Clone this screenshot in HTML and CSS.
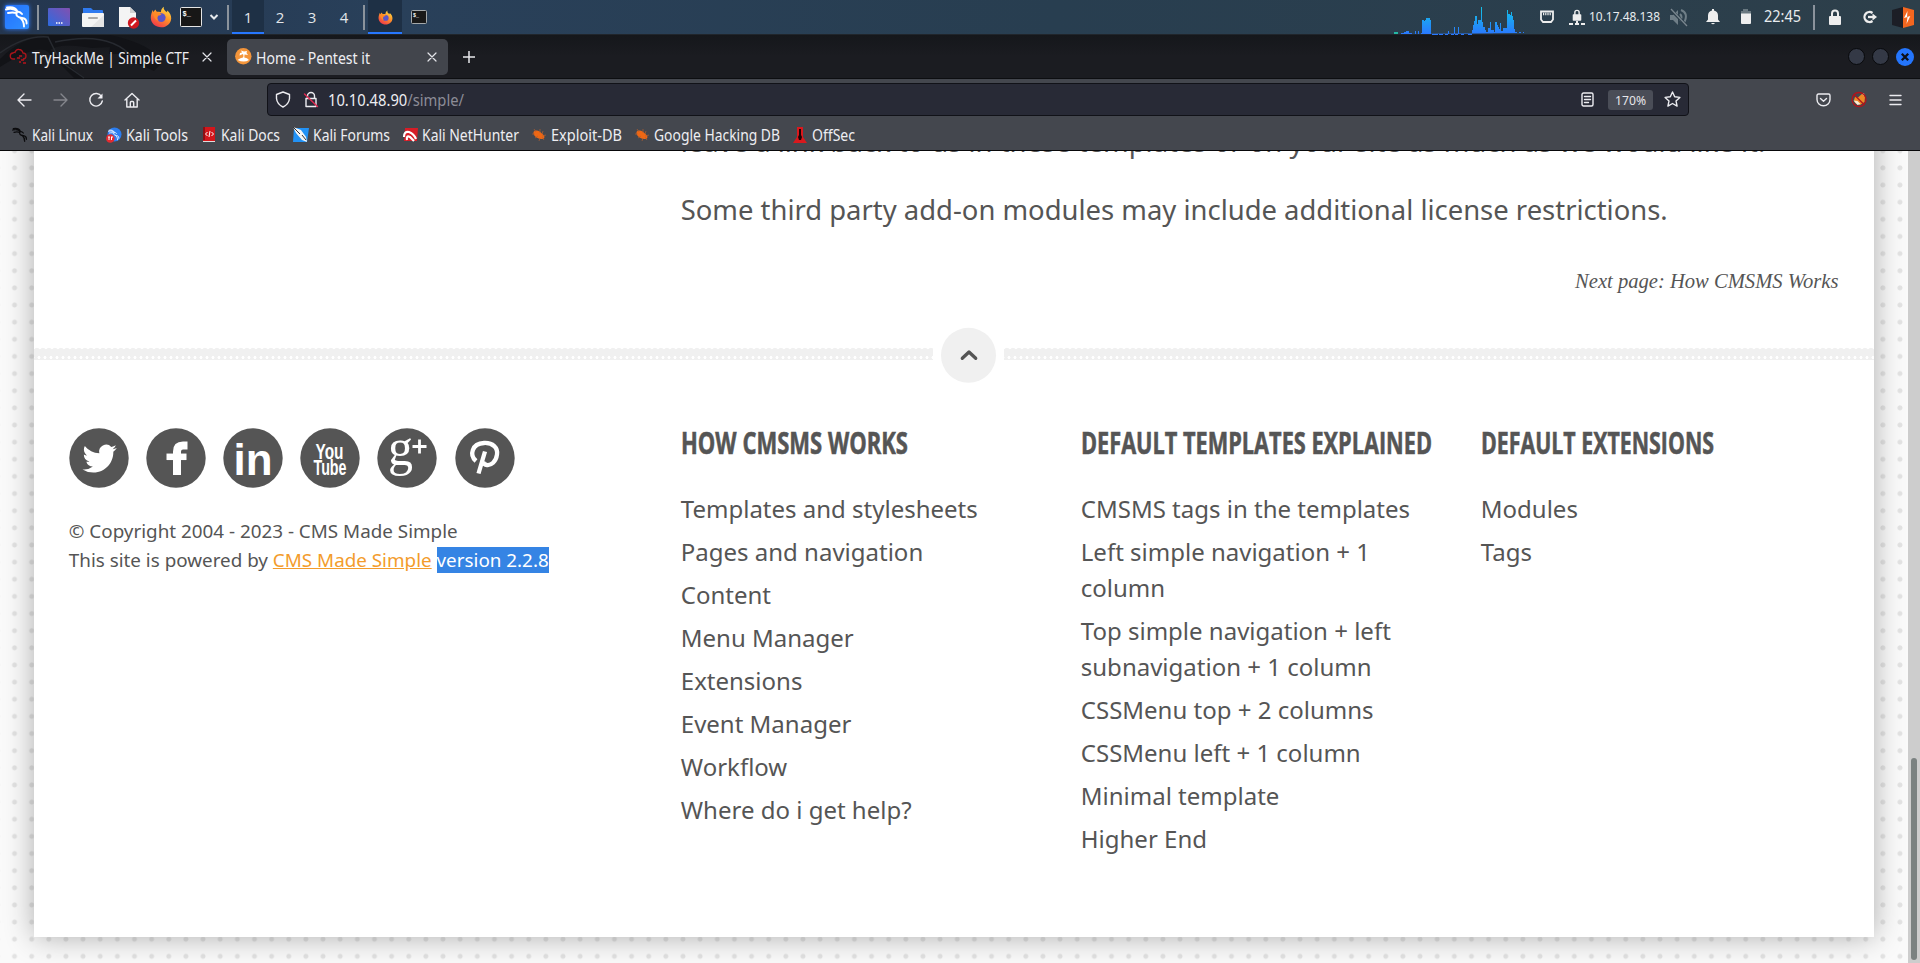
FILE: index.html
```html
<!DOCTYPE html>
<html lang="en">
<head>
<meta charset="utf-8">
<title>Home - Pentest it</title>
<link rel="stylesheet" href="styles.css">
</head>
<body>
<svg class="defs" width="0" height="0">
  <defs>
    <linearGradient id="gDesk" x1="0" y1="1" x2="1" y2="0"><stop offset="0" stop-color="#2d6be0"/><stop offset="1" stop-color="#8250b0"/></linearGradient>
    <linearGradient id="gKali" x1="0" y1="0" x2="1" y2="1"><stop offset="0" stop-color="#2470ff"/><stop offset="1" stop-color="#2f90ff"/></linearGradient>
    <linearGradient id="gFox" x1="0.8" y1="0" x2="0.2" y2="1"><stop offset="0" stop-color="#ffe14a"/><stop offset=".45" stop-color="#ff9328"/><stop offset="1" stop-color="#f0304d"/></linearGradient>
    <linearGradient id="gGraph" gradientUnits="userSpaceOnUse" x1="0" y1="10" x2="0" y2="34"><stop offset="0" stop-color="#14bde8"/><stop offset="1" stop-color="#2a78ff"/></linearGradient>
  </defs>
  <symbol id="firefox" viewBox="0 0 22 22">
    <path fill="url(#gFox)" d="M14 .8c-1 2 .5 3.300 1.500 4.500 1 .4 1.600 1.200 1.600 1.200-.2-1 .2-2 .2-2 2.700 2.200 4 5 3.900 8C21 17.600 16.700 21.300 11.300 21.300 5.600 21.300 1 17.300.8 12 .7 9 1.800 6.300 2.700 4l.8 2.200C4 5 5 4 5.700 3.500c0 1.300.7 1.900 1.500 2.300 2-.3 3 .1 3.600.4C11 3.800 12 1.900 14 .8z"/>
    <circle cx="11.300" cy="11.600" r="4.300" fill="#5a55c8"/>
    <path d="M3 7c2-1 4-1 6 0l2.500 1.200c-.8 1-1.800 1-3 1.400C7 11 7 13 8.500 15c-3-1-5-4-5.500-8z" fill="#ff8a26"/>
  </symbol>
  <symbol id="dragon" viewBox="0 0 24 24">
    <path d="M1 4.500c5-1.300 9-.6 11.500 2.200M3 8c4-1 6-.7 8.500 0M2 2.500C8 1.500 11 3 12.500 6.500c-3 4 1 6.300 4.500 6.500 3 .3 4.800 1.700 4.600 5.500M15 12.500c3 2.500 4 5 4 9M12.500 6.500c2 .3 3.500 1 4.500 2.500" fill="none" stroke="currentColor" stroke-width="1.900" stroke-linecap="round"/>
  </symbol>
  <symbol id="bug" viewBox="0 0 16 16">
    <path d="M2.500 5C5 2 9 4 13 8.500c1.300 2.200-.3 4-3 3.500C6 11.500 2 9 2.500 5z" fill="#ee6714"/>
    <path d="M1 7l3 0M4 11l3-2M3 2l2 3M9 2l0 4M12 4l-1 3M15 8l-4 1M8 14l1-3M13 13l-2-3" stroke="#b5602f" stroke-width=".7"/>
  </symbol>
  <symbol id="close" viewBox="0 0 10 10"><path d="M1 1l8 8M9 1l-8 8" stroke="#e4e5ea" stroke-width="1.200" stroke-linecap="round"/></symbol>
  <symbol id="padlock" viewBox="0 0 14 16"><path fill="#eee" d="M3 7V4.500a4 4 0 0 1 8 0V7h1q1 0 1 1v7q0 1-1 1H2q-1 0-1-1V8q0-1 1-1zm2 0h4V4.500a2 2 0 0 0-4 0z"/></symbol>
</svg>

<header class="panel">
  <svg class="kali" width="26" height="26"><rect x="1" y="1" width="24" height="24" rx="2" fill="url(#gKali)"/><g color="#fff"><use href="#dragon" x="1" y="1" width="24" height="24"/></g></svg>
  <i class="sep"></i>
  <svg width="22" height="18"><rect width="22" height="18" rx="1" fill="url(#gDesk)"/><path d="M8 15h1.500M10.500 15H12M13 15h1.500" stroke="#fff" stroke-width="1.500"/></svg>
  <svg width="22" height="21"><path d="M1 1h8l2 2h9q1 0 1 1v5H1z" fill="#2f7af0"/><path d="M0 7q0-1 1-1h20q1 0 1 1v12q0 1-1 1H1q-1 0-1-1z" fill="#f4f4f4"/><path d="M22 8v12H9z" fill="#e5e5e5"/><path d="M7 11h8" stroke="#aaa" stroke-width="2" stroke-linecap="round"/></svg>
  <svg width="23" height="23"><path d="M2 1h11l6 6v14H2z" fill="#f4f4f4"/><path d="M13 1v6h6z" fill="#cfcfcf"/><circle cx="16.500" cy="17" r="5.700" fill="#cf1820"/><path d="M14 19.500l5-5" stroke="#fff" stroke-width="2"/></svg>
  <svg width="23" height="22"><use href="#firefox" width="22" height="22"/></svg>
  <svg width="22" height="20"><rect x=".5" y=".5" width="21" height="19" rx="1" fill="#171717" stroke="#e5e5e5"/><text x="2.500" y="9" class="prompt">$_</text></svg>
  <svg width="10" height="8"><path d="M1.500 2l3.500 3.500L8.500 2" fill="none" stroke="#e6e9ec" stroke-width="2"/></svg>
  <i class="sep"></i>
  <span class="ws current">1</span><span class="ws">2</span><span class="ws">3</span><span class="ws">4</span>
  <i class="sep"></i>
  <span class="task current"><svg width="15" height="15"><use href="#firefox" width="15" height="15"/></svg></span>
  <span class="task"><svg width="16" height="14"><rect x=".5" y=".5" width="15" height="13" rx="1" fill="#191919" stroke="#a4a8aa"/><text x="2" y="6.500" class="prompt tiny">$_</text></svg></span>
  <svg width="140" height="34">
    <path fill="url(#gGraph)" d="M8 34v-1h3v-1h2v-1h3v2h3v1h3v-3h1v3h2v-3h1v3h2v-1h1v-13h2v1h1v-1h1v-2h4v2h1v14h1v2h2v-1h2v1h2v-2h1v2h3v-1h1v-1h2v2h3v-5h1v3h2v1h2v1h1v-9h1v9h3v-9h1v7h2v1h2v1h1v-2h4v1h4v-5h1v-5h1v-4h1v-5h2v8h1v-4h3v-13h1v15h1v5h2v3h1v2h2v-4h2v-6h1v8h3v2h1v-10h2v3h1v2h1v2h1v-6h1v8h2v-3h4v-18h1v4h2v1h1v-3h1v4h1v4h1v9h1v3h2v1h2v-1h2v1h2v-1h1v1z"/>
    <path d="M1 33h4" stroke="#25e0c0" stroke-width="1.500"/>
  </svg>
  <svg width="16" height="14"><path d="M2 1.500h12v8l-2 2.500H4L2 9.500z" fill="none" stroke="#eee" stroke-width="1.800"/><path d="M4 4h8" stroke="#eee" stroke-width="2.500" stroke-dasharray="1 .8"/></svg>
  <svg width="16" height="17"><use href="#padlock" x="3" width="10" height="12"/><path d="M0 15h4M6 15h4M12 15h4M8 12v4" stroke="#eee" stroke-width="2"/></svg>
  <svg width="73" height="18"><text x="-1" y="13" textLength="71" lengthAdjust="spacingAndGlyphs" class="ip">10.17.48.138</text></svg>
  <svg width="19" height="19"><path d="M1 7h3l5-5v15l-5-5H1z" fill="#6f7e87"/><path d="M11 6q3 3 0 7M12 2q8 3 3 13" fill="none" stroke="#6f7e87" stroke-width="2"/><path d="M1 1l17 17" stroke="#2b3c48" stroke-width="3"/><path d="M2 1l16 17" stroke="#7a8790" stroke-width="1.300"/></svg>
  <svg width="14" height="16"><path fill="#eee" d="M6 0h2v1.500q4 1 4 5v4l2 2.500H0l2-2.500v-4q0-4 4-5zM5 14h4q-2 2.500-4 0z"/></svg>
  <svg width="12" height="16"><path d="M1 5V2h2V0h5v2h3v3z" fill="#697880"/><path d="M1 4.500h10V14q0 1-1 1H2q-1 0-1-1z" fill="#eee"/></svg>
  <svg width="40" height="20"><text x="0" y="15" textLength="37" lengthAdjust="spacingAndGlyphs" class="clock">22:45</text></svg>
  <i class="sep"></i>
  <svg width="14" height="17"><use href="#padlock" width="14" height="16"/></svg>
  <svg width="16" height="14"><path d="M10.500 3A5 5 0 1 0 10.500 11" fill="none" stroke="#eee" stroke-width="2.300"/><path d="M6 7h6" stroke="#eee" stroke-width="2.300"/><path d="M10.500 3.500L15 7l-4.500 3.500z" fill="#eee"/></svg>
  <svg width="22" height="21"><path d="M0 3l11-3v21L0 18z" fill="#1c1e26"/><path d="M11 0l11 3v15l-11 3z" fill="#f3661f"/><path d="M15.500 4l-3.500 7 3.500-1-1 7 3.800-8-3.300 1z" fill="#fff"/></svg>
</header>

<nav class="tabs">
  <svg class="etching" width="180" height="43"><path d="M0 24Q20 3 50 0h60q45 10 52 28l-8 8-18-8-18 0 5-9-14 0 1-7-18 1Q60 7 50 15l34 28H74L48 17Q38 8 0 32z" fill="#121317"/><path d="M0 18Q25 0 48 2L60 26 84 43M55 7q55-12 78 16" fill="none" stroke="#272a30" stroke-width="1.500"/></svg>
  <svg width="17" height="17"><path d="M5 11H3.500A3 3 0 0 1 3 5Q4 4 5 4.500 6 1 9 1.500q3 0 4 3.500 3 0 3 3t-3 3" fill="none" stroke="#a8151b" stroke-width="1.300"/><path d="M7 10h3M11 12h3M9 14h2M13 15h3M9 8h3" stroke="#b7131b" stroke-width="1.300"/></svg>
  <svg width="165" height="24"><text x="0" y="18.500" textLength="157" lengthAdjust="spacingAndGlyphs" class="ui">TryHackMe | Simple CTF</text></svg>
  <svg width="10" height="10"><use href="#close" width="10" height="10"/></svg>
  <div class="tab-active">
    <svg width="17" height="17"><circle cx="8.300" cy="8.300" r="8.200" fill="#f4953a"/><path d="M2.500 12q3-2.500 5.500-2.500Q9 8 8 6L4.500 7.500 5 5 7 4.500 6 2.500l3 1L12 3l-.5 2L13 7 9.500 6.500 9.300 9.500q3 0 4.700 2.500-5 3-11.500 0z" fill="#fff"/></svg>
    <svg width="120" height="24"><text x="-1" y="18.500" textLength="114" lengthAdjust="spacingAndGlyphs" class="ui">Home - Pentest it</text></svg>
    <svg width="10" height="10"><use href="#close" width="10" height="10"/></svg>
  </div>
  <svg width="12" height="12"><path d="M6 0v12M0 6h12" stroke="#e8e8ec" stroke-width="1.500"/></svg>
  <i class="wbtn"></i><i class="wbtn"></i>
  <svg width="18" height="18"><circle cx="9" cy="9" r="9" fill="#2475fc"/><path d="M5.800 5.800l6.400 6.400M12.200 5.800l-6.400 6.400" stroke="#0d1017" stroke-width="2.300"/></svg>
</nav>

<div class="toolbar">
  <svg width="15" height="14" class="ln"><path d="M14 7H1M7 1L1 7l6 6"/></svg>
  <svg width="15" height="14" class="ln dim"><path d="M1 7h13M8 1l6 6-6 6"/></svg>
  <svg width="16" height="16" class="ln"><path d="M13.500 4.500A6.300 6.300 0 1 0 14.300 9"/><path d="M14.500 1.500v5h-5z" fill="#f0f0f4" stroke="none"/></svg>
  <svg width="16" height="16" class="ln"><path d="M1 8l7-6.500L15 8M2.800 7v8h10.400V7M6.300 15v-4.500q0-1 1-1h1.400q1 0 1 1V15"/></svg>
  <div class="urlbar">
    <svg width="16" height="17" class="ln"><path d="M8 1l6.500 2.500v4Q14 13 8 16 2 13 1.500 7.500v-4z"/></svg>
    <svg width="17" height="17" class="ln"><path d="M4.500 7.500V5a3.500 3.500 0 0 1 7 0v2.500M3 7.500h10V15.500H3z"/><path d="M1.500 3l13 12.500" class="slash"/></svg>
    <svg width="160" height="24"><text y="17.500" x="0" textLength="136" lengthAdjust="spacingAndGlyphs" class="ui">10.10.48.90<tspan class="path">/simple/</tspan></text></svg>
    <svg width="13" height="15" class="ln"><rect x="1" y="1" width="11" height="13" rx="1.500"/><path d="M3.500 4.500h6M3.500 7.500h6M3.500 10.500h4"/></svg>
    <span class="zoom"><svg width="32" height="18"><text x="0" y="14" textLength="31" lengthAdjust="spacingAndGlyphs" class="pct">170%</text></svg></span>
    <svg width="17" height="17" class="ln"><path d="M8.500 1l2.200 4.800 5.200.6-3.900 3.500 1.100 5.200-4.600-2.600-4.600 2.600L5 9.900 1.100 6.400l5.200-.6z"/></svg>
  </div>
  <svg width="15" height="14" class="ln"><path d="M2.500 1h10q1.500 0 1.500 1.500v4a6.500 6.300 0 0 1-13 0v-4Q1 1 2.500 1zM4.500 5.500l3 2.800 3-2.800"/></svg>
  <svg width="17" height="17"><path d="M4 6l3 .5L12 2l2 4-.5 5L9 14l-5-2-1-3z" fill="#ee8a25"/><path d="M2.500 9.500l4 4.500 3-1-3-3zM11 3l2-1 .5 3z" fill="#f6ead8"/><circle cx="8" cy="8.500" r="7" fill="none" stroke="#b2131b" stroke-width="1.300"/><path d="M3 3.500l10 10" stroke="#b2131b" stroke-width="1.300"/></svg>
  <svg width="13" height="12" class="ln"><path d="M1 1.500h11M1 6h11M1 10.500h11"/></svg>
</div>

<div class="bookmarks">
  <svg width="17" height="17" color="#0b0b0d"><use href="#dragon" width="16" height="16"/></svg>
  <svg width="66" height="22"><text y="16.500" textLength="61" lengthAdjust="spacingAndGlyphs" class="ui">Kali Linux</text></svg>
  <svg width="17" height="17" color="#e6efff"><circle cx="8.500" cy="7.500" r="7" fill="#2b7df0"/><use href="#dragon" x="2" y="2" width="12" height="12"/><circle cx="4.300" cy="11.500" r="4.300" fill="#e32b30"/><path d="M3 10v3M5.500 10v3M2 10h2M5 10h2" stroke="#fff"/></svg>
  <svg width="66" height="22"><text y="16.500" textLength="62" lengthAdjust="spacingAndGlyphs" class="ui">Kali Tools</text></svg>
  <svg width="15" height="16"><rect x="1" width="12" height="15" fill="#d3161b"/><path d="M1 0h2v13H1z" fill="#8c1014"/><path d="M1 14.500h12" stroke="#ddd"/><path d="M5.500 5l-2 2 2 2M9.500 5l2 2-2 2M8 4L7 10" fill="none" stroke="#fff"/></svg>
  <svg width="62" height="22"><text y="16.500" textLength="59" lengthAdjust="spacingAndGlyphs" class="ui">Kali Docs</text></svg>
  <svg width="17" height="16"><path d="M1 1h15l-2 14H0z" fill="#2292f5"/><path d="M0 0l8 3 5 7 1 5-5-2-6-7z" fill="#f4f4f4"/><path d="M0 0l7 7M9 8l4 5" stroke="#333"/></svg>
  <svg width="80" height="22"><text y="16.500" textLength="77" lengthAdjust="spacingAndGlyphs" class="ui">Kali Forums</text></svg>
  <svg width="17" height="16"><path d="M3 1h13l-1 13H2z" fill="#d61d27"/><path d="M2 10Q2 4 7 5q5 2 7 7M5 13q-1-5 3-3l4 4" fill="none" stroke="#fff" stroke-width="2.200"/></svg>
  <svg width="100" height="22"><text y="16.500" textLength="97" lengthAdjust="spacingAndGlyphs" class="ui">Kali NetHunter</text></svg>
  <svg width="16" height="16"><use href="#bug" width="16" height="16"/></svg>
  <svg width="75" height="22"><text y="16.500" textLength="71" lengthAdjust="spacingAndGlyphs" class="ui">Exploit-DB</text></svg>
  <svg width="16" height="16"><use href="#bug" width="16" height="16"/></svg>
  <svg width="130" height="22"><text y="16.500" textLength="126" lengthAdjust="spacingAndGlyphs" class="ui">Google Hacking DB</text></svg>
  <svg width="15" height="17"><path d="M4 0h6v10l4 6H0l4-6z" fill="#d9181d"/><path d="M6 2h2v6l1 2-1 3H6l-1-3 1-2z" fill="#1a0506"/></svg>
  <svg width="50" height="22"><text y="16.500" textLength="43" lengthAdjust="spacingAndGlyphs" class="ui">OffSec</text></svg>
</div>

<div class="viewport">
  <div class="canvas">
    <main class="sheet">
      <section class="article">
        <p class="cut">leave a link back to us in these templates or on your site as much as we would like it.</p>
        <p class="terms">Some third party add-on modules may include additional license restrictions.</p>
        <p class="next">Next page: How CMSMS Works</p>
      </section>
      <div class="divider">
        <i class="lace"></i>
        <svg width="71" height="56"><circle cx="35.500" cy="28.300" r="27.500" fill="#f0f0f0"/><path d="M29.300 31.300l6.700-6.300 6.700 6.300" fill="none" stroke="#555" stroke-width="3.300" stroke-linecap="round" stroke-linejoin="round"/></svg>
        <i class="lace"></i>
      </div>
      <footer class="foot">
        <div class="about">
          <div class="social">
            <svg width="60" height="60"><circle cx="30" cy="30" r="29.700"/><path transform="translate(13.500 13.500) scale(1.430)" fill="#fff" d="M23.953 4.570a10 10 0 0 1-2.825.775 4.958 4.958 0 0 0 2.163-2.723c-.951.555-2.005.959-3.127 1.184a4.920 4.920 0 0 0-8.384 4.482C7.690 8.095 4.067 6.130 1.640 3.162a4.822 4.822 0 0 0-.666 2.475c0 1.710.870 3.213 2.188 4.096a4.904 4.904 0 0 1-2.228-.616v.060a4.923 4.923 0 0 0 3.946 4.827 4.996 4.996 0 0 1-2.212.085 4.936 4.936 0 0 0 4.604 3.417 9.867 9.867 0 0 1-6.102 2.105c-.390 0-.779-.023-1.170-.067a13.995 13.995 0 0 0 7.557 2.209c9.053 0 13.998-7.496 13.998-13.985 0-.210 0-.420-.015-.630A9.935 9.935 0 0 0 24 4.590z"/></svg>
            <svg width="60" height="60"><circle cx="30" cy="30" r="29.700"/><path d="M41.500 17.500H37q-6 0-6 6V47" fill="none" stroke="#fff" stroke-width="8"/><path d="M20.500 28.800h20" stroke="#fff" stroke-width="6.500"/></svg>
            <svg width="60" height="60"><circle cx="30" cy="30" r="29.700"/><text x="10.500" y="47" textLength="39" lengthAdjust="spacingAndGlyphs" class="li">in</text></svg>
            <svg width="60" height="60"><circle cx="30" cy="30" r="29.700"/><text x="15.500" y="30.500" textLength="28" lengthAdjust="spacingAndGlyphs" class="yt">You</text><text x="13.500" y="47" textLength="33" lengthAdjust="spacingAndGlyphs" class="yt">Tube</text></svg>
            <svg width="60" height="60"><circle cx="30" cy="30" r="29.700"/><text x="11" y="37" textLength="25" lengthAdjust="spacingAndGlyphs" class="gp">g</text><path d="M42.500 11.500v14M35.500 18.500h14" stroke="#fff" stroke-width="2.800"/></svg>
            <svg width="60" height="60"><circle cx="30" cy="30" r="29.700"/><path d="M21 33C14 27 17 15.500 29 15c9-.5 14 5 13 11.500-1 7.500-6 11-10 10.500-2-.3-3.500-1.500-4-3M30 23.500L23.500 45.500" fill="none" stroke="#fff" stroke-width="4.300"/></svg>
          </div>
          <p class="legal">© Copyright 2004 - 2023 - CMS Made Simple<br>This site is powered by <a>CMS Made Simple</a> <mark>version 2.2.8</mark></p>
        </div>
        <div class="col">
          <h3><svg width="230" height="32"><text x="0" y="26" textLength="227" lengthAdjust="spacingAndGlyphs">HOW CMSMS WORKS</text></svg></h3>
          <ul><li>Templates and stylesheets</li><li>Pages and navigation</li><li>Content</li><li>Menu Manager</li><li>Extensions</li><li>Event Manager</li><li>Workflow</li><li>Where do i get help?</li></ul>
        </div>
        <div class="col">
          <h3><svg width="355" height="32"><text x="0" y="26" textLength="351" lengthAdjust="spacingAndGlyphs">DEFAULT TEMPLATES EXPLAINED</text></svg></h3>
          <ul><li>CMSMS tags in the templates</li><li>Left simple navigation + 1<br>column</li><li>Top simple navigation + left<br>subnavigation + 1 column</li><li>CSSMenu top + 2 columns</li><li>CSSMenu left + 1 column</li><li>Minimal template</li><li>Higher End</li></ul>
        </div>
        <div class="col">
          <h3><svg width="240" height="32"><text x="0" y="26" textLength="233" lengthAdjust="spacingAndGlyphs">DEFAULT EXTENSIONS</text></svg></h3>
          <ul><li>Modules</li><li>Tags</li></ul>
        </div>
      </footer>
    </main>
  </div>
  <div class="scrollbar"><i class="thumb"></i></div>
</div>
</body>
</html>
```

FILE: styles.css
```css
* { box-sizing: border-box; }
body { margin: 0; width: 1920px; height: 963px; overflow: hidden; display: flex; flex-direction: column; background: #fff; font-family: "Noto Sans", sans-serif; color: #555; }
svg { display: block; overflow: visible; }
.defs { position: absolute; }
p, h3, ul { margin: 0; padding: 0; list-style: none; font-weight: 400; }

/* desktop panel */
.panel { height: 35px; flex: none; padding-left: 4px; display: grid; align-items: center; justify-items: start;
  grid-template-rows: 34px;
  grid-template-columns: 33px 11px 34px 35px 33px 30px 29px 18px 5px 32px 32px 32px 35px 5px 34px 991px 146px 30px 21px 79px 37px 34px 24px 49px 15px 34px 30px 24px;
  background: linear-gradient(90deg, #24364f, #29405a 20%, #283e50 55%, #2d3f4a); border-bottom: 1px solid #20252b; }
.kali { filter: drop-shadow(0 0 2px #2f7bff); }
.sep { width: 2px; height: 25px; background: #8b939c; }
.ws, .task { width: 32px; height: 34px; display: flex; align-items: center; justify-content: center; color: #e2e6ea; font-family: "Open Sans", sans-serif; font-size: 15px; }
.task { width: 34px; }
.current { background: #1e3045; box-shadow: inset 0 -2px #2777ff; }
.prompt { fill: #fff; font: bold 7px "Liberation Mono", monospace; }
.tiny { font-size: 5px; }
.ip { fill: #e8ecef; font: 12px "Noto Sans", sans-serif; }
.clock { fill: #e8ecef; font: 16px "Noto Sans", sans-serif; }
.ui { fill: #eeeef2; font: 15.5px "Noto Sans", sans-serif; }
.ui .path { fill: #8c8c96; }
.pct { fill: #e6e6ea; font: 13px "Noto Sans", sans-serif; }

/* tab strip */
.tabs { position: relative; height: 44px; flex: none; padding-left: 10px; display: grid; align-items: center; justify-items: start; background: linear-gradient(#15171b, #1b1c21 50%); border-bottom: 1px solid #0d0e11;
  grid-template-columns: 22px 170px 25px 236px 1385px 24px 24px 20px; }
.tabs > * { position: relative; }
.tabs > .etching { position: absolute; left: 0; top: 0; }
.tab-active { width: 221px; height: 36px; border-radius: 5px; background: #42454c; padding-left: 8px; display: grid; grid-template-columns: 22px 170px 12px; align-items: center; }
.wbtn { width: 17px; height: 17px; border-radius: 50%; background: #343946; border: 1px solid #08090c; }

/* navigation */
.toolbar { height: 41px; flex: none; padding-left: 16.5px; display: grid; align-items: center; justify-items: start; background: #44474e; grid-template-columns: 36px 35px 36px 143.5px 1549px 35px 38px 14px; }
.urlbar { width: 1422px; height: 33px; background: #282a36; border: 1px solid #111218; border-radius: 4px; padding-left: 7px; display: grid; align-items: center; grid-template-columns: 28px 25px 1253px 27px 56px 20px; }
.ln { fill: none; stroke: #ececf0; stroke-width: 1.4; stroke-linejoin: round; stroke-linecap: round; }
.ln.dim { stroke: #85878d; }
.ln .slash { stroke: #e22850; }
.zoom { width: 45px; height: 20px; border-radius: 3px; background: #4a4d57; display: flex; align-items: center; justify-content: center; }
.bookmarks { height: 31px; flex: none; padding-left: 12px; background: #44474e; border-bottom: 1px solid #08080a; display: grid; align-items: center; grid-template-columns: 20px 74px 20px 76px 19px 72px 20px 89px 20px 109px 20px 83px 20px 139px 19px 60px; }

/* page */
.viewport { flex: 1; min-height: 0; display: flex; overflow: hidden; }
.canvas { width: 1908px; overflow: hidden; padding-left: 34px; background: #fafafa radial-gradient(circle at 8.5px 8.5px, #e3e3e3 2px, transparent 2.9px) 6px 8.4px / 17.15px 17.15px; }
.sheet { width: 1840px; height: 836px; margin-top: -50px; padding-top: 50px; background: #fff; box-shadow: 0 0 28px rgba(0, 0, 0, .31); }
.scrollbar { width: 12px; background: #cdcdcd; padding: 607px 3px 3px; }
.thumb { display: block; width: 6px; height: 202px; border-radius: 3px; background: #7b8281; }
.article { height: 176px; padding-left: 646.7px; font-size: 27.43px; overflow: hidden; white-space: nowrap; }
.cut { height: 0; line-height: 40px; margin-top: -29px; }
.terms { line-height: 40px; margin-top: 68px; }
.next { font: italic 20.6px/30px "Liberation Serif", serif; text-align: right; padding-right: 35.5px; margin-top: 36px; }
.divider { display: flex; align-items: center; height: 56px; }
.lace { flex: 0 0 899px; height: 13px; margin-bottom: 3px; background:
  radial-gradient(circle, #fff 1.2px, transparent 1.8px) 2px 8px / 6px 5px repeat-x,
  radial-gradient(circle at 3px 3px, #f0f0f0 2px, transparent 2.6px) 0 0 / 6px 3px repeat-x,
  linear-gradient(#f0f0f0, #f0f0f0) 0 2px / 100% 11px no-repeat; }
.lace:last-child { flex-basis: 870px; }
.foot { display: grid; grid-template-columns: 612px 400px 400px 360px; padding: 45px 0 0 34.8px; }
.social { display: grid; grid-template-columns: repeat(4, 77px) 78.3px 60px; fill: #555; }
.social text { fill: #fff; font-family: "Liberation Sans", sans-serif; font-weight: bold; }
.social .li { font-size: 45px; }
.social .yt { font-size: 22px; }
.social .gp { font: 53px "Liberation Serif", serif; }
.legal { margin-top: 29px; font-size: 18.84px; line-height: 29px; white-space: nowrap; }
.legal a { color: #f39c2c; text-decoration: underline; }
.legal mark { background: #3584e4; color: #fff; }
.col h3 { height: 63.4px; }
.col text { fill: #555; stroke: #555; stroke-width: .6px; font: bold 30.5px "Open Sans", sans-serif; }
.col li { font-size: 24px; line-height: 35.8px; margin-bottom: 7.2px; white-space: nowrap; }
```
